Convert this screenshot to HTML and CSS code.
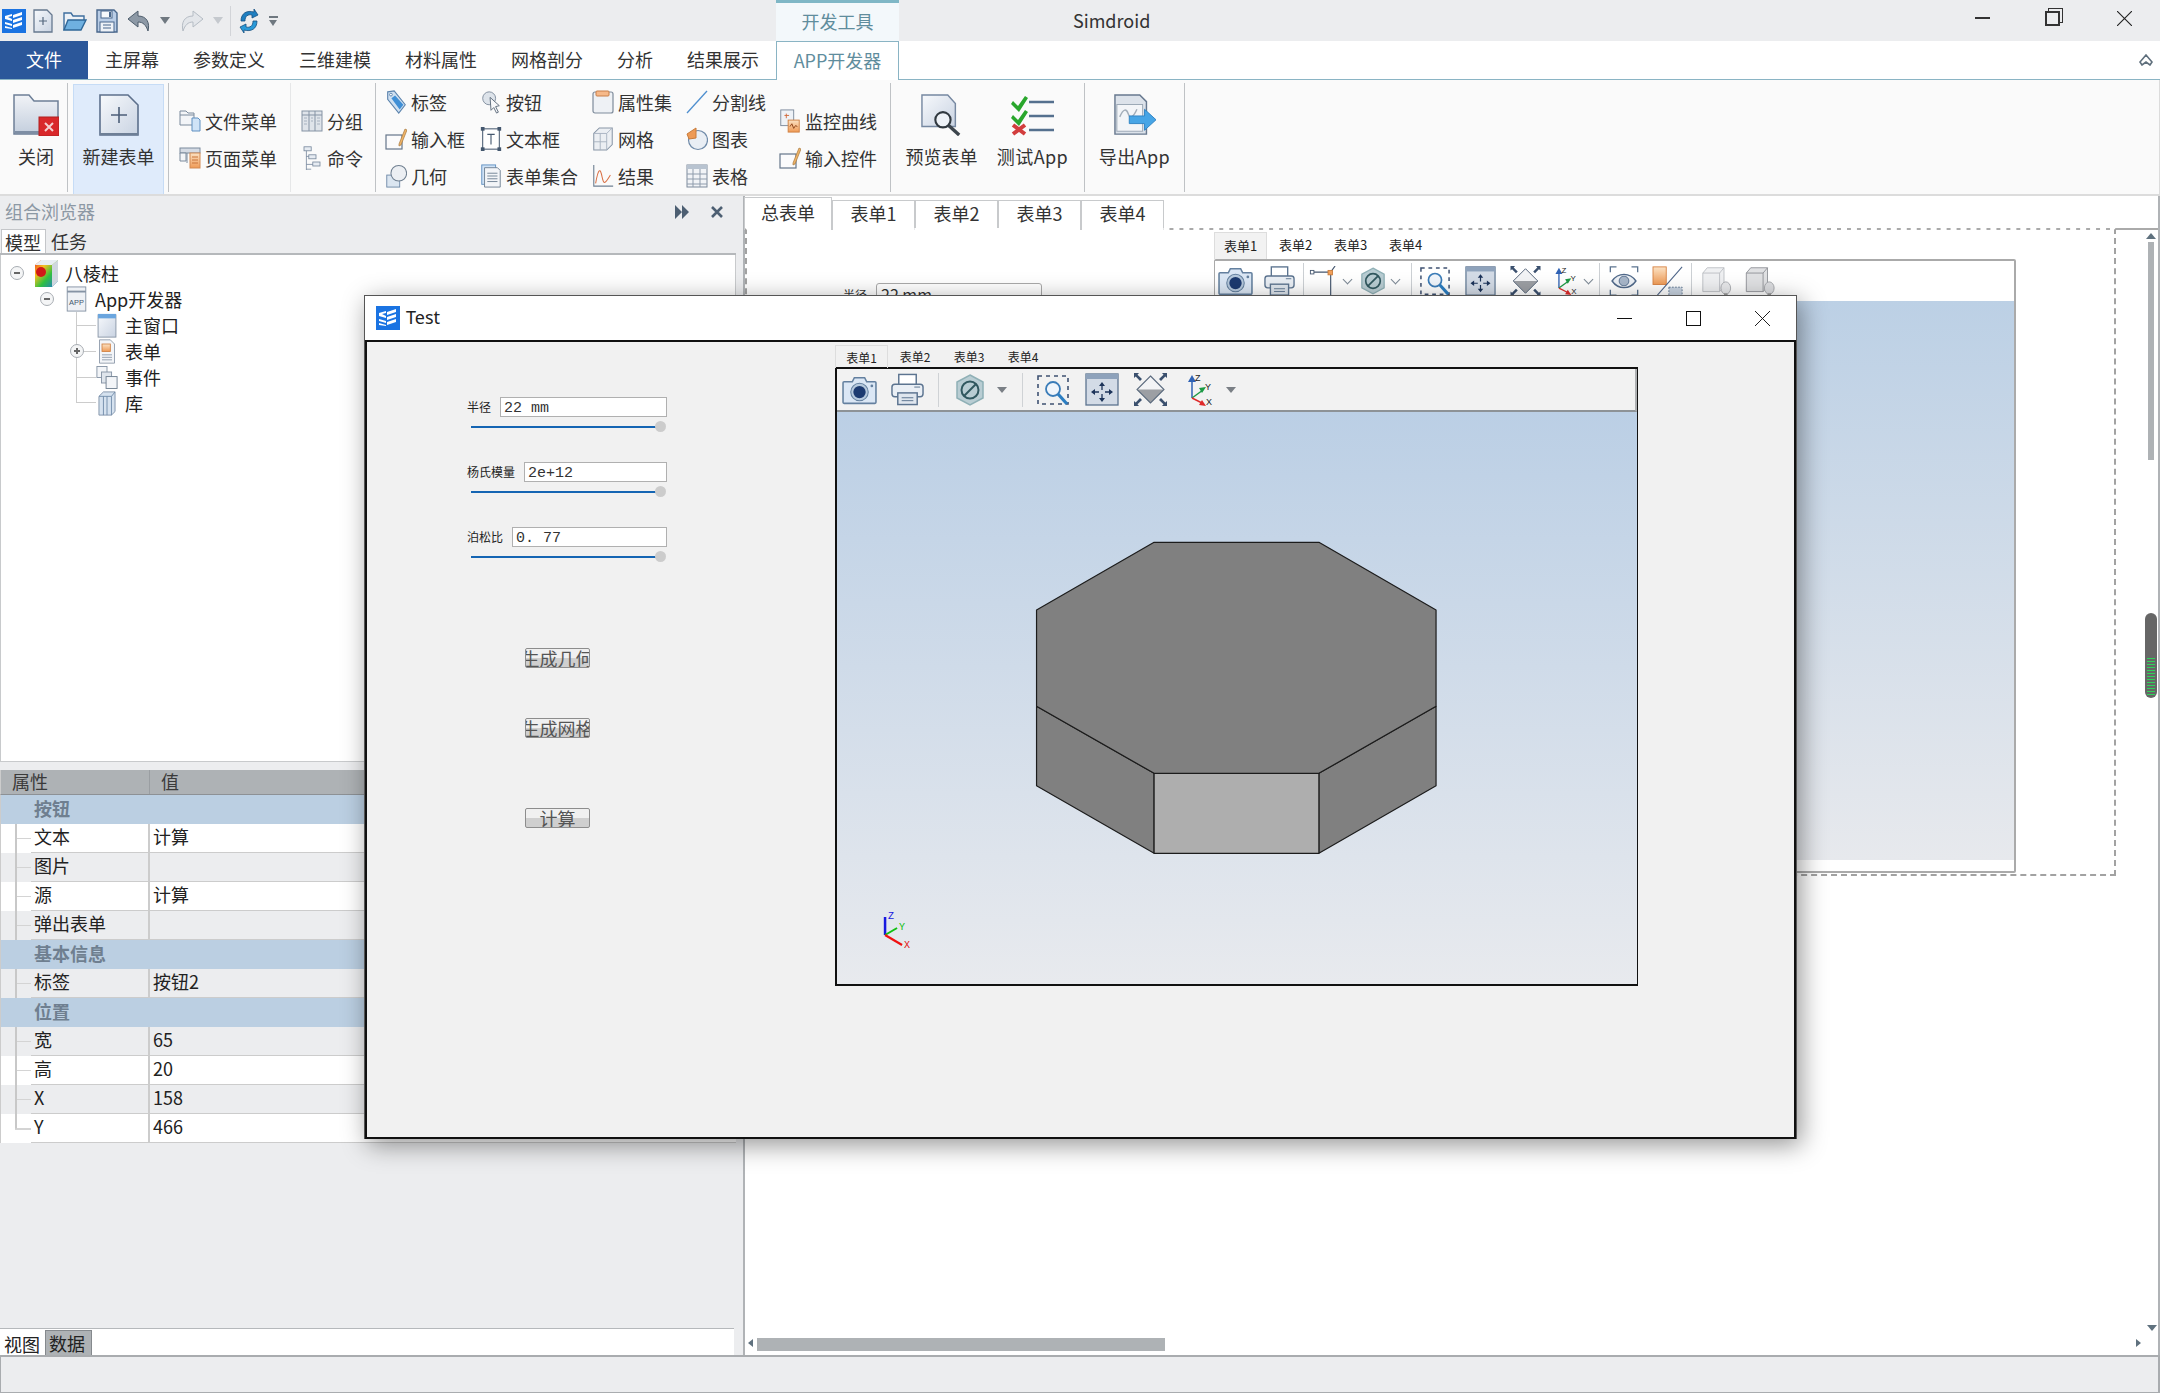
FILE: index.html
```html
<!DOCTYPE html>
<html lang="zh">
<head>
<meta charset="utf-8">
<title>Simdroid</title>
<link rel="stylesheet" href="styles.css">
</head>
<body>
<svg class="defs" aria-hidden="true">
  <defs>
    <linearGradient id="gPage" x1="0" y1="0" x2="1" y2="1"><stop offset="0" stop-color="#f7f9fc"/><stop offset="1" stop-color="#c9d3e2"/></linearGradient>
    <linearGradient id="gFolder" x1="0" y1="0" x2="0" y2="1"><stop offset="0" stop-color="#f1f3f7"/><stop offset="1" stop-color="#c3cedd"/></linearGradient>
    <linearGradient id="gOrange" x1="0" y1="0" x2="0" y2="1"><stop offset="0" stop-color="#fbe2c4"/><stop offset="1" stop-color="#ef9a55"/></linearGradient>
    <linearGradient id="gRainbow" x1="0" y1="0" x2="1" y2="1"><stop offset="0" stop-color="#f03020"/><stop offset=".3" stop-color="#f5c020"/><stop offset=".6" stop-color="#30c040"/><stop offset="1" stop-color="#2070e0"/></linearGradient>
    <symbol id="logo" viewBox="0 0 24 24"><rect width="24" height="24" fill="#1a73e2"/><path fill="#fff" d="M11 6l9-3v3l-9 3zM11 11l9-3v3l-9 3zM11 16l9-3v3l-9 3zM3 7l7-2v2l-4 1 4 2v2l-7-2zM3 13l7 2v2l-7-2zM3 17l7 2v1l-7-1z"/></symbol>
    <symbol id="qaNew" viewBox="0 0 22 24"><path d="M2 1h13l5 5v17H2z" fill="url(#gPage)" stroke="#66788f" stroke-width="1.3"/><path d="M11 8v8M7 12h8" stroke="#55687f" stroke-width="1.2"/></symbol>
    <symbol id="qaOpen" viewBox="0 0 24 24"><path d="M1 21V4h7l2 3h11v4" fill="#eef2f7" stroke="#3f6f9f" stroke-width="1.4"/><path d="M1 21l4-10h18l-5 10z" fill="#6fb0e0" stroke="#2f6798" stroke-width="1.4"/></symbol>
    <symbol id="qaSave" viewBox="0 0 22 24"><path d="M1 1h17l3 3v19H1z" fill="#b9cde6" stroke="#49678c" stroke-width="1.4"/><rect x="5" y="2" width="11" height="7" fill="#f6f9fc" stroke="#49678c"/><rect x="13" y="3" width="2" height="5" fill="#49678c"/><rect x="4" y="13" width="14" height="10" fill="#eef2f7" stroke="#49678c"/><path d="M7 16h8M7 19h8" stroke="#49678c"/></symbol>
    <symbol id="qaUndo" viewBox="0 0 24 24"><path d="M11 2L1 10l10 8v-5c5 0 8 3 10 9 2-8-1-15-10-15z" fill="#8d99a6" stroke="#4e5d6c"/></symbol>
    <symbol id="qaRedo" viewBox="0 0 24 24"><path d="M13 2l10 8-10 8v-5c-5 0-8 3-10 9-2-8 1-15 10-15z" fill="#e3e6ea" stroke="#b5bcc4"/></symbol>
    <symbol id="qaSync" viewBox="0 0 20 26"><path d="M2 13C2 5 8 2 15 4V1l4 6-6 3V7C9 6 6 8 6 13z" fill="#1f7fc0" stroke="#154f80" stroke-width=".8"/><path d="M18 13c0 8-6 11-13 9v3l-4-6 6-3v3c4 1 7-1 7-6z" fill="#2a9ad8" stroke="#154f80" stroke-width=".8"/></symbol>
    <symbol id="close" viewBox="0 0 46 42"><path d="M1 40V1h15l5 6h24v33z" fill="url(#gFolder)" stroke="#6d7f97" stroke-width="1.5"/><path d="M2 37h42v3H2z" fill="#7e8ea4"/><rect x="26" y="23" width="20" height="19" fill="#d9282a" stroke="#b02020"/><path d="M32 29l8 8M40 29l-8 8" stroke="#f4d0d0" stroke-width="2"/></symbol>
    <symbol id="newForm" viewBox="0 0 40 42"><path d="M1 1h28l10 10v30H1z" fill="url(#gPage)" stroke="#5d708c" stroke-width="1.6"/><path d="M20 13v16M12 21h16" stroke="#4c5e78" stroke-width="1.6"/><path d="M1 39h38v2H1z" fill="#6e7f96"/></symbol>
    <symbol id="fileMenu" viewBox="0 0 22 22"><path d="M1 1h6l2 2h6v12H1z" fill="#f3f5f8" stroke="#7b8a9c"/><path d="M1 5h14" stroke="#7b8a9c"/><path d="M13 8h6l2 2v11h-8z" fill="#cfe3f7" stroke="#5e8fc0"/></symbol>
    <symbol id="pageMenu" viewBox="0 0 22 22"><rect x="1" y="1" width="20" height="5" fill="#d5dbe4" stroke="#7b8a9c"/><path d="M1 6h6v8H1zM8 6v10" fill="#f3f5f8" stroke="#7b8a9c"/><rect x="11" y="6" width="10" height="15" fill="url(#gOrange)" stroke="#d28a52"/><path d="M13 10h6M13 13h6M13 16h6" stroke="#c9743a"/></symbol>
    <symbol id="group" viewBox="0 0 22 22"><rect x="1" y="1" width="20" height="20" fill="#dfe4ea" stroke="#8593a4"/><path d="M1 5h20M8 1v20M14 1v20" stroke="#8593a4"/><path d="M3 8h3M3 11h3M3 14h3M10 8h2M10 11h2M16 8h3M16 11h3M16 14h3" stroke="#a7b2c0"/></symbol>
    <symbol id="command" viewBox="0 0 22 30"><rect x="1" y="1" width="9" height="5" fill="#e6ebf2" stroke="#74859a"/><rect x="7" y="11" width="9" height="5" fill="#e6ebf2" stroke="#74859a"/><rect x="12" y="20" width="9" height="5" fill="#e6ebf2" stroke="#74859a"/><path d="M4 6v24M4 13h3M4 23h8M4 29h6" stroke="#74859a" fill="none"/></symbol>
    <symbol id="tag" viewBox="0 0 22 26"><path d="M2 2l7-1 12 15-7 9L2 10z" fill="#cfe0f1" stroke="#5b83ad" stroke-width="1.2"/><path d="M6 9l9 12 4-5-9-10z" fill="#3f8fd6"/><circle cx="5.500" cy="5" r="1.500" fill="#fff" stroke="#5b83ad"/></symbol>
    <symbol id="btn" viewBox="0 0 20 26"><circle cx="8" cy="9" r="7" fill="#dde3ea" stroke="#7f8c9c"/><path d="M9 8l10 9-4 1 3 6-2 1-3-6-3 3z" fill="#f7f8fa" stroke="#5a6878"/></symbol>
    <symbol id="sheetTab" viewBox="0 0 22 24"><rect x="1" y="2" width="20" height="21" rx="2" fill="#eef1f5" stroke="#7e8b9b" stroke-width="1.2"/><rect x="4" y="1" width="13" height="5" rx="1" fill="#f6b98a" stroke="#c97f49"/></symbol>
    <symbol id="slash" viewBox="0 0 22 24"><path d="M1 23L21 1" stroke="#4f8fcf" stroke-width="1.300"/></symbol>
    <symbol id="input" viewBox="0 0 22 22"><rect x="1" y="7" width="16" height="14" fill="#fbfbfc" stroke="#65768a" stroke-width="1.2"/><path d="M14 16l6-15 2 1-6 15-2 1z" fill="#f0b467" stroke="#a6783f" stroke-width=".7"/></symbol>
    <symbol id="textbox" viewBox="0 0 22 26"><rect x="2" y="2" width="18" height="22" fill="#fff" stroke="#44576e" stroke-width="1.1"/><rect x="0" y="0" width="4" height="4" fill="#44576e"/><rect x="18" y="0" width="4" height="4" fill="#44576e"/><rect x="0" y="22" width="4" height="4" fill="#44576e"/><rect x="18" y="22" width="4" height="4" fill="#44576e"/><path d="M7 8h8M11 8v11" stroke="#44576e" stroke-width="1.200"/></symbol>
    <symbol id="mesh" viewBox="0 0 22 26"><path d="M1 7l6-6h14v18l-6 6H1z" fill="#eceff3" stroke="#8795a6" stroke-width="1.1"/><path d="M1 7h14v18M15 7l6-6M1 16h14M8 7v18" stroke="#a7b2c0" fill="none"/></symbol>
    <symbol id="chart" viewBox="0 0 22 24"><circle cx="12" cy="13" r="9.500" fill="#e9eef4" stroke="#6f8aa8" stroke-width="1.200"/><path d="M10 1L1 7l2 5 7-1z" fill="#ee9a55" stroke="#c87b3a"/></symbol>
    <symbol id="geom" viewBox="0 0 22 26"><rect x="1" y="12" width="14" height="13" fill="#dbe6f1" stroke="#6f8aa8"/><circle cx="14" cy="10" r="8.500" fill="#eceff3" stroke="#6f7f90" stroke-width="1.100"/></symbol>
    <symbol id="formSet" viewBox="0 0 22 26"><rect x="1" y="1" width="15" height="21" fill="#cfe2f5" stroke="#5e8fc0"/><path d="M4 4h14l3 3v18H4z" fill="#f3f5f8" stroke="#6f8093"/><path d="M7 10h11M7 13h11M7 16h11M7 19h11" stroke="#6f8093"/></symbol>
    <symbol id="result" viewBox="0 0 22 26"><path d="M1 1v23h21" fill="none" stroke="#6f8093" stroke-width="1.200"/><path d="M3 21C6 4 8 4 10 14s4 6 9-2" fill="none" stroke="#d97045" stroke-width="1.100"/></symbol>
    <symbol id="table" viewBox="0 0 22 24"><rect x="1" y="1" width="20" height="22" fill="#f2f4f7" stroke="#7c8a9b"/><rect x="1" y="1" width="20" height="4" fill="#b8c3d0"/><path d="M1 10h20M1 15h20M1 20h20M7 5v18M14 5v18" stroke="#8f9cac"/></symbol>
    <symbol id="monitor" viewBox="0 0 22 26"><rect x="1" y="1" width="14" height="17" fill="#eef2f7" stroke="#7c8a9b"/><path d="M5 7h5M7 5v5" stroke="#d2693a"/><rect x="9" y="12" width="12" height="13" fill="url(#gOrange)" stroke="#cf7f40"/><path d="M11 19l2-3 2 5 2-3 2 1" stroke="#8a3f15" fill="none"/></symbol>
    <symbol id="preview" viewBox="0 0 44 44"><path d="M1 1h27l8 9v24H1z" fill="url(#gPage)" stroke="#7688a1" stroke-width="1.500"/><circle cx="23" cy="27" r="8" fill="#eef2f7" stroke="#30383f" stroke-width="2.200"/><path d="M29 33l11 10" stroke="#3d454d" stroke-width="3.500"/></symbol>
    <symbol id="test" viewBox="0 0 44 42"><path d="M2 7l5 5L14 2l3 2-9 14-8-8zM2 21l5 5 7-10 3 2-9 14-8-8z" fill="#29a62c"/><path d="M2 31l12 9M14 31L2 40" stroke="#d23d3d" stroke-width="4"/><path d="M18 8h25M18 22h25M18 36h25" stroke="#55708e" stroke-width="2.500"/></symbol>
    <symbol id="exportI" viewBox="0 0 44 44"><path d="M1 1h26l7 7v34H1z" fill="#dce2ea" stroke="#67788e" stroke-width="1.500"/><rect x="3" y="11" width="27" height="28" fill="#f3f5f8" stroke="#9aa6b4"/><path d="M6 24c4-9 7-9 9-3s6 2 9-5" stroke="#a3adb9" fill="none" stroke-width="1.500"/><path d="M16 23h16v-7l12 11-12 11v-7H16z" fill="#47a5e6" stroke="#2f83c4"/></symbol>
    <symbol id="appI" viewBox="0 0 22 28"><rect x="1" y="1" width="20" height="26" fill="#eef1f5" stroke="#8593a4"/><path d="M1 6h20" stroke="#8593a4" stroke-width="2"/><text x="11" y="20" font-family="Liberation Sans" font-size="8" text-anchor="middle" fill="#44576e">APP</text></symbol>
    <symbol id="winI" viewBox="0 0 22 28"><rect x="1" y="2" width="20" height="25" fill="url(#gPage)" stroke="#8593a4"/><rect x="1" y="1" width="20" height="5" fill="#6aa5de"/></symbol>
    <symbol id="formI" viewBox="0 0 20 30"><path d="M1 1h13l5 5v23H1z" fill="#f3f5f8" stroke="#8593a4"/><rect x="4" y="6" width="10" height="9" fill="url(#gOrange)" stroke="#cf7f40"/><path d="M4 19h12M4 22h12M4 25h12" stroke="#8593a4"/></symbol>
    <symbol id="eventI" viewBox="0 0 24 26"><rect x="1" y="1" width="11" height="12" fill="#f3f5f8" stroke="#8593a4"/><rect x="6" y="7" width="11" height="12" fill="#dfe5ec" stroke="#8593a4"/><rect x="11" y="12" width="12" height="13" fill="#f3f5f8" stroke="#6f7f90"/></symbol>
    <symbol id="libI" viewBox="0 0 20 28"><path d="M1 6l5-5h13v22l-4 4H1z" fill="#d6e2ef" stroke="#7c8fa6"/><path d="M1 6h14v21M15 6l4-5M6 6v21M10 6v21" stroke="#6f8aa8" fill="none"/></symbol>
    <symbol id="rootI" viewBox="0 0 23 28"><path d="M0 6l6-5h17v21l-6 6H0z" fill="url(#gRainbow)"/><path d="M17 6l6-5v21l-6 6z" fill="#cfd6df"/><path d="M0 6l6-5h17l-6 5z" fill="#e8edf3"/><circle cx="6" cy="13" r="5" fill="#d01818"/></symbol>
    <symbol id="camera" viewBox="0 0 34 28"><path d="M2 6h8l2-4h10l2 4h8a1 1 0 0 1 1 1v19a1 1 0 0 1-1 1H2a1 1 0 0 1-1-1V7a1 1 0 0 1 1-1z" fill="#dbe7f5" stroke="#64809f" stroke-width="1.500"/><circle cx="17" cy="16" r="8.500" fill="#b6c9dd" stroke="#64809f"/><circle cx="17" cy="16" r="6" fill="#1c3a70"/><circle cx="29" cy="10" r="1.300" fill="#64809f"/></symbol>
    <symbol id="printer" viewBox="0 0 34 33"><rect x="8" y="1" width="18" height="11" fill="#fff" stroke="#5c7490" stroke-width="1.500"/><rect x="1" y="11" width="32" height="13" rx="3" fill="#eaeff5" stroke="#5c7490" stroke-width="1.500"/><rect x="7" y="20" width="20" height="12" fill="#dfe6ee" stroke="#5c7490" stroke-width="1.500"/><path d="M11 25h12M11 28h12M24 14h6" stroke="#5c7490"/></symbol>
    <symbol id="hex" viewBox="0 0 28 32"><path d="M14 1l13 7v16l-13 7-13-7V8z" fill="#b9cdd3" stroke="#8fb0b6" stroke-width="1.500"/><circle cx="14" cy="16" r="8.500" fill="none" stroke="#31585f" stroke-width="2"/><path d="M8 22L20 10" stroke="#31585f" stroke-width="2"/></symbol>
    <symbol id="zoomBox" viewBox="0 0 32 32"><rect x="1" y="2" width="30" height="28" fill="none" stroke="#3f5272" stroke-width="1.600" stroke-dasharray="4 4"/><circle cx="16" cy="15" r="7" fill="#f0f5fb" stroke="#3a7cb8" stroke-width="1.800"/><path d="M21 20l9 10" stroke="#2c7ec2" stroke-width="3.200"/></symbol>
    <symbol id="fit" viewBox="0 0 34 33"><rect x="1" y="1" width="32" height="31" fill="#d3dbe6" stroke="#5c7490" stroke-width="1.300"/><rect x="1" y="1" width="32" height="5" fill="#8ea2bb"/><path d="M17 12v5M17 21v5M8 19h6M20 19h6" stroke="#1c3359" stroke-width="1.300"/><path d="M17 9l-3 4h6zM17 29l-3-4h6zM6 19l4-3v6zM28 19l-4-3v6z" fill="#1c3359"/></symbol>
    <symbol id="diamond" viewBox="0 0 33 33"><path d="M16.500 3L30 16.500H3z" fill="#f3f4f6"/><path d="M3 16.500h27L16.500 30z" fill="#9c9fa4"/><path d="M16.500 3L30 16.500 16.500 30 3 16.500z" fill="none" stroke="#5b6a7e" stroke-width="1.100"/><path d="M0 0h5L3.500 1.700 8 6 6 8 1.700 3.500 0 5zM33 0h-5l1.500 1.700L25 6l2 2 4.300-4.500L33 5zM0 33h5l-1.500-1.700L8 27l-2-2-4.300 4.500L0 28zM33 33h-5l1.500-1.700L25 27l2-2 4.300 4.500L33 28z" fill="#3b506e"/></symbol>
    <symbol id="axes" viewBox="0 0 28 34"><path d="M6 25V6" stroke="#2f62b5" stroke-width="1.500"/><path d="M6 2L2 9h8z" fill="#2f62b5"/><path d="M6 25l11-8" stroke="#1d9a45" stroke-width="1.500"/><path d="M20 14l-7 1 3 5z" fill="#1d9a45"/><path d="M6 25l10 5" stroke="#e02a2a" stroke-width="1.500"/><path d="M20 33l-7-1 3-5z" fill="#e02a2a"/><text x="9" y="8" font-family="Liberation Sans" font-size="9" fill="#222">Z</text><text x="19" y="17" font-family="Liberation Sans" font-size="9" fill="#222">Y</text><text x="20" y="32" font-family="Liberation Sans" font-size="9" fill="#222">X</text></symbol>
    <symbol id="clip" viewBox="0 0 32 34"><path d="M1 7h22M23 7v27M23 7l5-7" stroke="#44566e" stroke-width="1.300" fill="none"/><rect x="0" y="5" width="4" height="4" fill="#fff" stroke="#44566e"/><rect x="20" y="5" width="5" height="5" fill="#f2a05a" stroke="#c87b3a"/></symbol>
    <symbol id="eye" viewBox="0 0 33 34"><path d="M1 7V1h7M25 1h7v6M1 27v6h7M25 33h7v-6" fill="none" stroke="#5c7490" stroke-width="1.500"/><path d="M3 17C10 7 23 7 30 17 23 27 10 27 3 17z" fill="#edf1f6" stroke="#50698a" stroke-width="1.600"/><circle cx="16.500" cy="17" r="5.500" fill="#a8b7ca" stroke="#50698a"/></symbol>
    <symbol id="sect" viewBox="0 0 34 34"><rect x="0" y="1" width="15" height="20" fill="url(#gOrange)" stroke="#d67f3e"/><path d="M33 1L5 33" stroke="#4b6387" stroke-width="1.200"/><rect x="18" y="24" width="15" height="14" fill="#c8d3e0" stroke="#5c7490" stroke-dasharray="2 1.500"/></symbol>
    <symbol id="cubeA" viewBox="0 0 33 34"><path d="M1 8l5-6h19v22l-5 5H1z" fill="#eff0f2" stroke="#bbbec3"/><path d="M1 8h19v21M20 8l5-6" fill="none" stroke="#bbbec3"/><ellipse cx="27" cy="25" rx="5.500" ry="7" fill="#e8e9eb" stroke="#a6a9ad"/><rect x="25" y="31" width="4" height="4" fill="#999"/></symbol>
    <symbol id="cubeB" viewBox="0 0 33 34"><path d="M1 8l5-6h19v22l-5 5H1z" fill="#e0e1e3" stroke="#8d9095"/><path d="M1 8h19v21M20 8l5-6" fill="none" stroke="#8d9095"/><ellipse cx="27" cy="25" rx="5.500" ry="7" fill="#dcdde0" stroke="#a0a3a7"/><rect x="25" y="31" width="4" height="4" fill="#999"/></symbol>
  </defs>
</svg>

<div class="app">
  <header class="titlebar">
    <div class="qa">
      <svg class="qa-logo"><use href="#logo"/></svg>
      <svg class="qa-i qa-new"><use href="#qaNew"/></svg>
      <svg class="qa-i qa-open"><use href="#qaOpen"/></svg>
      <svg class="qa-i qa-save"><use href="#qaSave"/></svg>
      <svg class="qa-i qa-undo"><use href="#qaUndo"/></svg>
      <span class="caret caret-dark"></span>
      <svg class="qa-i qa-redo"><use href="#qaRedo"/></svg>
      <span class="caret caret-light"></span>
      <span class="qa-sep"></span>
      <svg class="qa-i qa-sync"><use href="#qaSync"/></svg>
      <span class="caret-more"></span>
    </div>
    <div class="context-tab">开发工具</div>
    <div class="app-title">Simdroid</div>
    <div class="win-ctrl">
      <span class="ctl ctl-min"></span>
      <span class="ctl ctl-restore"></span>
      <svg class="ctl-x" viewBox="0 0 16 16"><path d="M0 0L16 16M16 0L0 16" stroke="#222" stroke-width="1.200"/></svg>
    </div>
  </header>

  <nav class="tabs">
    <div class="tab tab-file">文件</div>
    <div class="tab t1">主屏幕</div>
    <div class="tab t2">参数定义</div>
    <div class="tab t3">三维建模</div>
    <div class="tab t4">材料属性</div>
    <div class="tab t5">网格剖分</div>
    <div class="tab t6">分析</div>
    <div class="tab t7">结果展示</div>
    <div class="tab tab-active">APP开发器</div>
    <svg class="collapse" viewBox="0 0 16 12"><path d="M8 1l6 7-2 3-4-3-4 3-2-3z" fill="#fff" stroke="#5f6f7c" stroke-width="1.600"/></svg>
  </nav>

  <section class="ribbon">
    <div class="big g-close">
      <svg class="big-i close-i"><use href="#close"/></svg>
      <span>关闭</span>
    </div>
    <div class="r-sep"></div>
    <div class="big g-new">
      <svg class="big-i new-i"><use href="#newForm"/></svg>
      <span>新建表单</span>
    </div>
    <div class="r-sep r-sep-a"></div>
    <div class="col g-menu">
      <div class="ri"><svg class="ico"><use href="#fileMenu"/></svg><span>文件菜单</span></div>
      <div class="ri"><svg class="ico"><use href="#pageMenu"/></svg><span>页面菜单</span></div>
    </div>
    <div class="r-sep r-sep-faint"></div>
    <div class="col g-group">
      <div class="ri"><svg class="ico"><use href="#group"/></svg><span>分组</span></div>
      <div class="ri"><svg class="ico"><use href="#command"/></svg><span>命令</span></div>
    </div>
    <div class="r-sep"></div>
    <div class="g-grid">
      <div class="col">
        <div class="ri"><svg class="ico"><use href="#tag"/></svg><span>标签</span></div>
        <div class="ri"><svg class="ico"><use href="#input"/></svg><span>输入框</span></div>
        <div class="ri"><svg class="ico"><use href="#geom"/></svg><span>几何</span></div>
      </div>
      <div class="col">
        <div class="ri"><svg class="ico"><use href="#btn"/></svg><span>按钮</span></div>
        <div class="ri"><svg class="ico"><use href="#textbox"/></svg><span>文本框</span></div>
        <div class="ri"><svg class="ico"><use href="#formSet"/></svg><span>表单集合</span></div>
      </div>
      <div class="col">
        <div class="ri"><svg class="ico"><use href="#sheetTab"/></svg><span>属性集</span></div>
        <div class="ri"><svg class="ico"><use href="#mesh"/></svg><span>网格</span></div>
        <div class="ri"><svg class="ico"><use href="#result"/></svg><span>结果</span></div>
      </div>
      <div class="col">
        <div class="ri"><svg class="ico"><use href="#slash"/></svg><span>分割线</span></div>
        <div class="ri"><svg class="ico"><use href="#chart"/></svg><span>图表</span></div>
        <div class="ri"><svg class="ico"><use href="#table"/></svg><span>表格</span></div>
      </div>
      <div class="col col-two">
        <div class="ri"><svg class="ico"><use href="#monitor"/></svg><span>监控曲线</span></div>
        <div class="ri"><svg class="ico"><use href="#input"/></svg><span>输入控件</span></div>
      </div>
    </div>
    <div class="r-sep"></div>
    <div class="big g-preview">
      <svg class="big-i pv-i"><use href="#preview"/></svg>
      <span>预览表单</span>
    </div>
    <div class="big g-test">
      <svg class="big-i pv-i"><use href="#test"/></svg>
      <span>测试App</span>
    </div>
    <div class="r-sep"></div>
    <div class="big g-export">
      <svg class="big-i pv-i"><use href="#exportI"/></svg>
      <span>导出App</span>
    </div>
    <div class="r-sep"></div>
  </section>

  <main class="workspace">
    <aside class="left">
      <div class="browser-head">
        <span class="browser-title">组合浏览器</span>
        <svg class="head-i" viewBox="0 0 16 16"><path d="M1 1l7 7-7 7zM8 1l7 7-7 7z" fill="#4d5f72"/></svg>
        <svg class="head-x" viewBox="0 0 14 14"><path d="M2 2l10 10M12 2L2 12" stroke="#4d5f72" stroke-width="2.600"/></svg>
      </div>
      <div class="mini-tabs">
        <span class="mt mt-on">模型</span>
        <span class="mt">任务</span>
      </div>
      <div class="tree">
        <div class="row lv0"><span class="exp"></span><svg class="ti root-i"><use href="#rootI"/></svg><span>八棱柱</span></div>
        <div class="row lv1"><span class="exp"></span><svg class="ti app-i"><use href="#appI"/></svg><span>App开发器</span></div>
        <div class="row lv2"><span class="tl"></span><svg class="ti leaf-i"><use href="#winI"/></svg><span>主窗口</span></div>
        <div class="row lv2"><span class="tl"><span class="exp exp-plus"></span></span><svg class="ti leaf-i"><use href="#formI"/></svg><span>表单</span></div>
        <div class="row lv2"><span class="tl"></span><svg class="ti leaf-i"><use href="#eventI"/></svg><span>事件</span></div>
        <div class="row lv2"><span class="tl tl-end"></span><svg class="ti leaf-i"><use href="#libI"/></svg><span>库</span></div>
      </div>
      <div class="props">
        <div class="p-head"><span class="p-name0">属性</span><span class="p-val0">值</span></div>
        <div class="p-group">按钮</div>
        <div class="p-row"><span class="gut"></span><span class="p-name">文本</span><span class="p-val">计算</span></div>
        <div class="p-row alt"><span class="gut"></span><span class="p-name">图片</span><span class="p-val"></span></div>
        <div class="p-row"><span class="gut"></span><span class="p-name">源</span><span class="p-val">计算</span></div>
        <div class="p-row alt"><span class="gut"></span><span class="p-name">弹出表单</span><span class="p-val"></span></div>
        <div class="p-group">基本信息</div>
        <div class="p-row alt"><span class="gut"></span><span class="p-name">标签</span><span class="p-val">按钮2</span></div>
        <div class="p-group">位置</div>
        <div class="p-row alt"><span class="gut"></span><span class="p-name">宽</span><span class="p-val">65</span></div>
        <div class="p-row"><span class="gut"></span><span class="p-name">高</span><span class="p-val">20</span></div>
        <div class="p-row alt"><span class="gut"></span><span class="p-name">X</span><span class="p-val">158</span></div>
        <div class="p-row"><span class="gut gut-end"></span><span class="p-name">Y</span><span class="p-val">466</span></div>
      </div>
      <div class="bottom-tabs">
        <span class="bt">视图</span>
        <span class="bt bt-on">数据</span>
      </div>
    </aside>

    <section class="right">
      <div class="doc-tabs">
        <span class="dt dt-on">总表单</span>
        <span class="dt">表单1</span>
        <span class="dt">表单2</span>
        <span class="dt">表单3</span>
        <span class="dt">表单4</span>
      </div>
      <div class="canvas">
        <div class="ghost-field"><span class="ghost-label">半径</span><span class="ghost-input">22 mm</span></div>
        <div class="preview">
          <div class="pv-tabs">
            <span class="pt pt-on">表单1</span><span class="pt">表单2</span><span class="pt">表单3</span><span class="pt">表单4</span>
          </div>
          <div class="pv-box">
            <div class="pv-tools">
              <svg class="tb tb-cam"><use href="#camera"/></svg>
              <svg class="tb tb-pr"><use href="#printer"/></svg>
              <span class="tb-sep"></span>
              <svg class="tb tb-clip"><use href="#clip"/></svg>
              <span class="chev"></span>
              <svg class="tb tb-hex"><use href="#hex"/></svg>
              <span class="chev"></span>
              <span class="tb-sep"></span>
              <svg class="tb tb-zoom"><use href="#zoomBox"/></svg>
              <svg class="tb tb-fit"><use href="#fit"/></svg>
              <svg class="tb tb-dia"><use href="#diamond"/></svg>
              <svg class="tb tb-ax"><use href="#axes"/></svg>
              <span class="chev"></span>
              <span class="tb-sep"></span>
              <svg class="tb tb-eye"><use href="#eye"/></svg>
              <svg class="tb tb-sect"><use href="#sect"/></svg>
              <span class="tb-sep"></span>
              <svg class="tb tb-cube"><use href="#cubeA"/></svg>
              <svg class="tb tb-cube2"><use href="#cubeB"/></svg>
            </div>
            <div class="pv-view"></div>
          </div>
        </div>
      </div>
      <div class="sb-up"></div>
      <div class="sb-v"></div>
      <div class="grip"><div class="grip-lines"></div></div>
      <div class="sb-down"></div>
      <div class="sb-left"></div>
      <div class="sb-h"></div>
      <div class="sb-right"></div>
    </section>
  </main>

  <footer class="status"></footer>
</div>

<div class="window">
  <div class="w-title">
    <svg class="w-logo"><use href="#logo"/></svg>
    <span class="w-name">Test</span>
    <div class="w-ctrl">
      <span class="w-min"></span>
      <span class="w-max"></span>
      <svg class="w-x" viewBox="0 0 16 16"><path d="M0 0L16 16M16 0L0 16" stroke="#111" stroke-width="1"/></svg>
    </div>
  </div>
  <div class="w-body">
    <div class="form">
      <div class="field">
        <div class="field-line"><label class="f-label">半径</label><span class="f-input">22 mm</span></div>
        <div class="slider"><span class="knob"></span></div>
      </div>
      <div class="field">
        <div class="field-line"><label class="f-label">杨氏模量</label><span class="f-input">2e+12</span></div>
        <div class="slider"><span class="knob"></span></div>
      </div>
      <div class="field">
        <div class="field-line"><label class="f-label">泊松比</label><span class="f-input">0. 77</span></div>
        <div class="slider"><span class="knob"></span></div>
      </div>
      <div class="fbtn fb1"><span>生成几何</span></div>
      <div class="fbtn fb2"><span>生成网格</span></div>
      <div class="fbtn fb3"><span>计算</span></div>
    </div>
    <div class="view-wrap">
      <div class="v-tabs">
        <span class="vt vt-on">表单1</span><span class="vt">表单2</span><span class="vt">表单3</span><span class="vt">表单4</span>
      </div>
      <div class="v-frame">
        <div class="v-tools">
          <svg class="vb vb-cam"><use href="#camera"/></svg>
          <svg class="vb vb-pr"><use href="#printer"/></svg>
          <span class="vb-sep"></span>
          <svg class="vb vb-hex"><use href="#hex"/></svg>
          <span class="chev2"></span>
          <span class="vb-sep vb-sep2"></span>
          <svg class="vb vb-zoom"><use href="#zoomBox"/></svg>
          <svg class="vb vb-fit"><use href="#fit"/></svg>
          <svg class="vb vb-dia"><use href="#diamond"/></svg>
          <svg class="vb vb-ax"><use href="#axes"/></svg>
          <span class="chev2"></span>
        </div>
        <svg class="scene" viewBox="837 412 799 572" preserveAspectRatio="none">
          <g stroke="#1c1c1c" stroke-width="1.200" stroke-linejoin="round">
            <polygon fill="#808080" points="1036.300,706.300 1153.700,773.300 1153.700,853.300 1036.300,785.700"/>
            <polygon fill="#808080" points="1435.300,706.300 1318.300,773.300 1318.300,853.300 1435.300,785.700"/>
            <polygon fill="#aeaeae" points="1153.700,773.300 1318.300,773.300 1318.300,853.300 1153.700,853.300"/>
            <polygon fill="#808080" points="1153.700,542.300 1318.300,542.300 1435.300,610 1435.300,706.300 1318.300,773.300 1153.700,773.300 1036.300,706.300 1036.300,610"/>
          </g>
          <path d="M885 935V917" stroke="#1818e0" stroke-width="2.500"/>
          <path d="M885 935L897 928" stroke="#10c010" stroke-width="2"/>
          <path d="M885 935L902 945" stroke="#f01010" stroke-width="2.200"/>
          <text class="tri tri-z" x="888" y="919">Z</text>
          <text class="tri tri-y" x="899" y="930">Y</text>
          <text class="tri tri-x" x="904" y="948">X</text>
        </svg>
      </div>
    </div>
  </div>
</div>
</body>
</html>
```

FILE: styles.css
```css
* { box-sizing: border-box; }
html, body { margin: 0; padding: 0; height: 1393px; overflow: hidden; background: #fff; }
body { font-family: "Noto Sans CJK SC", "Noto Sans", sans-serif; font-size: 18px; color: #333; position: relative; }
svg { display: block; flex: none; }
.defs { position: absolute; width: 0; height: 0; }
.app { display: flex; flex-direction: column; width: 2160px; height: 1393px; }

/* title bar */
.titlebar { height: 41px; background: #ecedef; display: flex; flex: none; }
.qa { width: 776px; flex: none; display: flex; align-items: center; padding-left: 2px; }
.qa-logo { width: 24px; height: 24px; }
.qa-i { height: 24px; }
.qa-new { width: 22px; margin-left: 6px; }
.qa-open { width: 24px; margin-left: 9px; }
.qa-save { width: 22px; margin-left: 9px; }
.qa-undo { width: 24px; margin-left: 9px; }
.caret { width: 0; height: 0; border: 5px solid transparent; border-top: 7px solid #6f7880; border-bottom: 0; margin-left: 9px; }
.caret-light { border-top-color: #c5c9ce; }
.qa-redo { width: 24px; margin-left: 10px; }
.caret-light { margin-left: 9px; }
.qa-sep { width: 1px; height: 30px; background: #d2d4d8; margin-left: 7px; }
.qa-sync { width: 20px; height: 26px; margin-left: 8px; }
.caret-more { width: 9px; height: 9px; margin-left: 10px; border-top: 2px solid #6f7880; }
.caret-more::after { content: ""; display: block; margin-top: 2px; width: 0; height: 0; border: 4.5px solid transparent; border-top: 6px solid #6f7880; border-bottom: 0; }
.context-tab { width: 123px; flex: none; background: #f3f8fb; border-top: 3px solid #7fb7c6; color: #5f8d9d; text-align: center; line-height: 36px; }
.app-title { margin-left: 174px; line-height: 40px; color: #333; }
.win-ctrl { margin-left: auto; width: 185px; height: 41px; display: flex; padding: 0 28px 0 0; justify-content: flex-end; align-items: center; gap: 56px; }
.ctl { display: block; }
.ctl-min { width: 15px; height: 2px; background: #333; margin-top: -5px; }
.ctl-restore { width: 15px; height: 15px; border: 2px solid #333; margin: -4px 1px 0 -1px; box-shadow: 3px -3px 0 -1px #ecedef, 3px -3px 0 0 #333; }
.ctl-x { width: 15px; height: 15px; margin-top: -5px; }

/* tabs */
.tabs { height: 39px; background: #fff; border-bottom: 1px solid #8ab4c4; display: flex; flex: none; }
.tab { line-height: 36px; height: 38px; white-space: nowrap; color: #333; }
.tab-file { width: 88px; background: #2b579a; color: #fff; text-align: center; }
.t1 { margin-left: 17px; width: 54px; }
.t2, .t3, .t4, .t5, .t7 { margin-left: 34px; width: 72px; }
.t6 { margin-left: 34px; width: 36px; }
.tab-active { margin-left: 17px; width: 123px; height: 39px; background: #fff; border: 1px solid #8ab4c4; border-bottom: 0; color: #5f8d9d; text-align: center; }
.collapse { width: 16px; height: 12px; margin: 13px 6px 0 auto; }

/* ribbon */
.ribbon { height: 116px; background: #fafafa; border-bottom: 2px solid #dcdcdc; border-right: 1px solid #dcdcdc; display: flex; flex: none; }
.r-sep { width: 1px; height: 109px; margin-top: 3px; background: #bfc2c5; flex: none; }
.r-sep-a { margin-left: 4px; }
.r-sep-faint { background: #e6e7e8; }
.big { display: flex; flex-direction: column; align-items: center; flex: none; }
.big span { line-height: 24px; white-space: nowrap; margin-top: 8px; }
.big-i { margin-top: 14px; }
.g-close { width: 67px; padding-left: 5px; }
.close-i { width: 46px; height: 42px; }
.g-new { width: 91px; margin: 4px 0 0 5px; background: #dfebfb; border: 1px solid #c6dcf6; border-bottom: 0; height: 110px; }
.g-new .big-i { margin-top: 9px; }
.new-i { width: 40px; height: 42px; }
.pv-i { width: 44px; height: 42px; }
.g-preview { width: 91px; margin-left: 5px; }
.g-test { width: 91px; margin-right: 6px; }
.g-export { width: 99px; }
.g-test span, .g-export span { letter-spacing: .4px; }
.col { display: flex; flex-direction: column; justify-content: center; flex: none; padding-top: 4px; height: 114px; }
.ri { height: 37px; display: flex; align-items: center; gap: 4px; white-space: nowrap; }
.ico { width: 22px; height: 24px; }
.g-menu { width: 121px; padding-left: 10px; }
.g-group { width: 84px; padding-left: 10px; }
.g-grid { display: grid; grid-template-columns: 95px 112px 94px 93px 99px; padding-left: 9px; flex: none; width: 514px; }

/* workspace */
.workspace { flex: 1; display: flex; min-height: 0; }
.left { width: 743px; flex: none; background: #ecedef; display: flex; flex-direction: column; }
.browser-head { height: 31px; width: 736px; display: flex; align-items: center; padding-left: 5px; flex: none; margin-bottom: 2px; }
.browser-title { color: #8c98a4; flex: 1; line-height: 31px; }
.head-i { width: 16px; height: 16px; margin-right: 20px; }
.head-x { width: 14px; height: 14px; margin-right: 12px; }
.mini-tabs { height: 26px; display: flex; align-items: flex-end; padding-left: 1px; flex: none; width: 736px; border-bottom: 2px solid #b5b8bb; }
.mt { height: 24px; line-height: 24px; padding: 0 4px; margin-right: 1px; white-space: nowrap; }
.mt-on { background: #fff; border: 1px solid #c4c6c9; border-bottom: 0; width: 45px; padding: 0 3px; }
.tree { height: 507px; width: 736px; background: #fff; border: 1px solid #c8cacc; border-top: 0; padding-top: 5px; flex: none; }
.row { height: 26px; display: flex; align-items: center; white-space: nowrap; color: #222; }
.lv0 { padding-left: 9px; }
.lv1 { padding-left: 39px; }
.lv2 { padding-left: 75px; }
.exp { width: 14px; height: 14px; border: 1px solid #a8adb3; border-radius: 50%; background: linear-gradient(#666, #666) center/6px 2px no-repeat #f4f5f6; flex: none; display: block; }
.exp-plus { background: linear-gradient(#666, #666) center/6px 2px no-repeat, linear-gradient(#666, #666) center/2px 6px no-repeat, #f4f5f6; margin: 6px 0 0 -7px; }
.ti { flex: none; }
.root-i { width: 23px; height: 28px; margin: 0 7px 0 11px; }
.app-i { width: 21px; height: 26px; margin: 0 8px 0 12px; }
.leaf-i { width: 22px; height: 25px; margin-right: 7px; }
.tl { width: 20px; height: 26px; border-left: 1px solid #ccc; background: linear-gradient(#ccc, #ccc) left center/100% 1px no-repeat; flex: none; }
.tl-end { height: 13px; align-self: flex-start; background: linear-gradient(#ccc, #ccc) left bottom/100% 1px no-repeat; }
.props { margin-top: 8px; width: 736px; flex: none; }
.p-head { height: 25px; background: #aeb2b5; border-bottom: 1px solid #8d9195; display: flex; align-items: center; color: #3a3a3a; border-left: 1px solid #ccc; }
.p-name0 { width: 149px; padding-left: 11px; border-right: 1px solid #9a9ea2; line-height: 22px; height: 24px; }
.p-val0 { padding-left: 11px; line-height: 22px; height: 24px; }
.p-group { height: 29px; line-height: 26px; background: #bbcfe2; padding-left: 33px; font-weight: 700; color: #6f7f90; border-left: 1px solid #ccc; }
.p-row { height: 29px; background: #fff; display: flex; line-height: 25px; color: #222; border-left: 1px solid #ccc; }
.p-row.alt { background: #ecedef; }
.gut { width: 30px; flex: none; background: linear-gradient(#c8c8c8, #c8c8c8) 14px 0/2px 100% no-repeat, linear-gradient(#d4d4d4, #d4d4d4) 14px center/16px 1px no-repeat; }
.gut-end { background: linear-gradient(#c8c8c8, #c8c8c8) 14px 0/2px 50% no-repeat, linear-gradient(#d4d4d4, #d4d4d4) 14px center/16px 2px no-repeat; }
.p-name { width: 119px; border-bottom: 1px solid #ccc; border-right: 2px solid #ccc; padding-left: 3px; }
.p-val { flex: 1; border-bottom: 1px solid #ccc; padding-left: 3px; }
.bottom-tabs { margin-top: auto; height: 27px; width: 734px; background: #fff; display: flex; align-items: flex-end; border-top: 1px solid #b5b8bb; }
.bt { height: 23px; line-height: 24px; padding-left: 4px; width: 44px; color: #222; }
.bt-on { background: #aeb2b5; border: 1px solid #85898d; border-bottom: 0; width: 47px; margin-left: 1px; height: 25px; padding-left: 3px; }

.right { flex: 1; position: relative; background: #fff; border-left: 2px solid #b0b3b6; border-right: 2px solid #b0b3b6; }
.doc-tabs { height: 34px; padding-top: 1px; display: flex; align-items: flex-end; border-bottom: 2px solid #aaa; margin-left: -1px; }
.dt { width: 83px; height: 30px; line-height: 25px; text-align: center; border: 1px solid #c8cacc; border-bottom: 0; background: #fff; flex: none; margin-bottom: -2px; }
.dt-on { width: 88px; height: 33px; line-height: 28px; }
.canvas { width: 1371px; height: 648px; margin-top: -2px; border: 2px dashed #a2a2a2; border-top-color: #fff; position: relative; padding: 2px 0 0 467px; }
.ghost-field { position: absolute; left: 96px; top: 53px; display: flex; align-items: flex-start; }
.ghost-label { font-size: 12px; line-height: 20px; width: 33px; margin-top: 2px; }
.ghost-input { width: 166px; height: 22px; border: 1px solid #aaa; border-radius: 3px; line-height: 20px; padding-left: 4px; font-size: 16px; }
.preview { width: 802px; position: relative; }
.pv-tabs { height: 27px; display: flex; }
.pt { width: 55px; font-size: 13px; line-height: 26px; text-align: center; color: #222; }
.pt-on { width: 53px; background: #f2f2f2; border: 1px solid #ddd; border-bottom: 0; margin-right: 1px; }
.pv-box { height: 614px; border: 1px solid #aaa; border-width: 2px 2px 2px 1px; background: #fff; border-radius: 2px; }
.pv-tools { height: 40px; display: flex; align-items: center; padding-left: 3px; }
.tb { height: 30px; }
.tb-sep { width: 1px; height: 36px; background: #ccd0d4; }
.tb-cam { width: 35px; }
.tb-pr { width: 33px; margin: 0 7px 0 10px; }
.tb-clip { width: 31px; margin-left: 5px; }
.chev { width: 7px; height: 7px; border: solid #7d8a96; border-width: 0 1.500px 1.500px 0; transform: rotate(45deg); margin: 0 11px 4px 4px; flex: none; }
.tb-hex { width: 24px; height: 32px; margin-left: -1px; }
.tb-hex + .chev { margin: 0 12px 4px 7px; }
.tb-zoom { width: 32px; margin-left: 7px; }
.tb-fit { width: 33px; margin-left: 13px; }
.tb-dia { width: 33px; margin-left: 12px; }
.tb-ax { width: 26px; margin-left: 11px; }
.tb-ax + .chev { margin: 0 7px 4px 6px; }
.tb-eye { width: 32px; margin-left: 8px; }
.tb-sect { width: 34px; margin: 0 6px 0 11px; }
.tb-cube { width: 33px; margin-left: 8px; }
.tb-cube2 { width: 34px; margin-left: 10px; }
.pv-view { height: 559px; background: linear-gradient(#bcd0e5, #e7e9ed); }

.sb-up { position: absolute; left: 1401px; top: 37px; width: 0; height: 0; border: 5px solid transparent; border-bottom: 6px solid #5f717e; border-top: 0; }
.sb-v { position: absolute; left: 1403px; top: 46px; width: 6px; height: 218px; background: #aeb2b5; }
.grip { position: absolute; left: 1400px; top: 417px; width: 12px; height: 85px; background: #666; border-radius: 6px; }
.grip-lines { margin: 45px 2px 0; height: 37px; background: repeating-linear-gradient(#2fd25a 0 1px, #666 1px 3px); }
.sb-down { position: absolute; left: 1402px; top: 1129px; width: 0; height: 0; border: 5px solid transparent; border-top: 6px solid #5f717e; border-bottom: 0; }
.sb-left { position: absolute; left: 3px; top: 1143px; width: 0; height: 0; border: 4px solid transparent; border-right: 5px solid #5f717e; border-left: 0; }
.sb-h { position: absolute; left: 12px; top: 1142px; width: 408px; height: 13px; background: #aeb2b5; }
.sb-right { position: absolute; left: 1391px; top: 1143px; width: 0; height: 0; border: 4px solid transparent; border-left: 5px solid #5f717e; border-right: 0; }

.status { height: 38px; flex: none; background: #ecedef; border: 1px solid #a9acaf; border-width: 2px 2px 1px 1px; }

/* floating window */
.window { position: absolute; left: 364px; top: 295px; width: 1433px; height: 844px; background: #fff; border: 1px solid #555; border-width: 1px 1px 0 1px; box-shadow: 4px 6px 24px rgba(0,0,0,.42); display: flex; flex-direction: column; }
.w-title { height: 44px; flex: none; display: flex; align-items: center; padding-left: 11px; }
.w-logo { width: 24px; height: 24px; }
.w-name { margin: -2px 0 0 6px; color: #222; font-family: "Noto Sans", sans-serif; }
.w-ctrl { margin-left: auto; display: flex; align-items: center; height: 44px; padding-right: 26px; gap: 54px; }
.w-min { width: 15px; height: 1px; background: #111; }
.w-max { width: 15px; height: 15px; border: 1px solid #111; }
.w-x { width: 15px; height: 15px; }
.w-body { flex: 1; border: 2px solid #111; background: #f1f1f1; display: flex; min-height: 0; }
.form { width: 468px; flex: none; padding: 55px 0 0 100px; }
.field { width: 200px; height: 65px; }
.field-line { display: flex; align-items: center; height: 20px; }
.f-label { font-size: 12px; line-height: 22px; color: #222; margin-right: 9px; white-space: nowrap; }
.f-input { flex: 1; height: 20px; background: #fff; border: 1.500px solid #b0b0b0; font-family: "Liberation Mono", monospace; font-size: 15px; line-height: 21px; padding-left: 3px; color: #333; white-space: pre; }
.slider { height: 2px; background: #1565b3; margin: 9px 7px 0 4px; position: relative; }
.knob { position: absolute; right: -6px; top: -5px; width: 11px; height: 11px; background: #ccc; border-radius: 50%; }
.fbtn { width: 65px; height: 20px; margin-left: 58px; border: 1px solid #8d8d8d; border-radius: 2px; background: linear-gradient(#f0f0f0 50%, #cfcfcf 50%); display: flex; justify-content: center; overflow: hidden; color: #555; }
.fbtn span { line-height: 18px; white-space: nowrap; flex: none; }
.fb1 { margin-top: 56px; }
.fb2 { margin-top: 50px; }
.fb3 { margin-top: 70px; }
.view-wrap { width: 803px; margin-top: 3px; flex: none; }
.v-tabs { height: 23px; display: flex; }
.vt { width: 54px; font-size: 12px; line-height: 24px; text-align: center; color: #222; }
.vt-on { width: 53px; border: 1px solid #ddd; border-bottom: 0; }
.v-frame { height: 619px; border: 2px solid #111; border-right-width: 1.500px; display: flex; flex-direction: column; margin-top: -1px; }
.v-tools { height: 43px; flex: none; background: #f2f2f2; border-bottom: 2px solid #8d9296; border-right: 2px solid #aeb0b2; display: flex; align-items: center; padding-left: 5px; }
.vb { height: 30px; }
.vb-cam { width: 35px; }
.vb-pr { width: 33px; margin-left: 14px; height: 33px; }
.vb-sep { width: 1px; height: 34px; background: #cfd2d5; margin-left: 14px; }
.vb-hex { width: 28px; height: 32px; margin-left: 17px; }
.chev2 { width: 0; height: 0; border: 5px solid transparent; border-top: 6px solid #7a7f85; border-bottom: 0; margin-left: 13px; }
.vb-sep2 { margin-left: 15px; }
.vb-zoom { width: 32px; height: 32px; margin-left: 14px; }
.vb-fit { width: 34px; height: 33px; margin-left: 16px; }
.vb-dia { width: 33px; height: 33px; margin-left: 15px; }
.vb-ax { width: 28px; height: 34px; margin-left: 19px; }
.vb-ax + .chev2 { margin-left: 12px; }
.scene { flex: 1; width: 100%; min-height: 0; background: linear-gradient(#bbcfe5, #e8eaee); }
.tri { font-family: "Liberation Mono", monospace; font-size: 10px; }
.tri-z { fill: #1818e0; }
.tri-y { fill: #10c010; }
.tri-x { fill: #e01010; }
```
